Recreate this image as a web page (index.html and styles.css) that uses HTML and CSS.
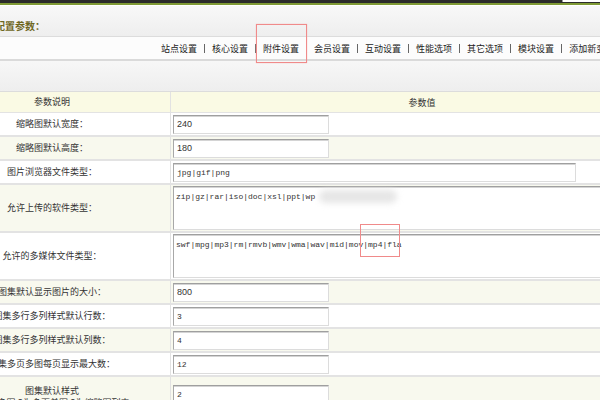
FILE: index.html
```html
<!DOCTYPE html>
<html lang="zh-CN">
<head>
<meta charset="utf-8">
<title>系统配置参数</title>
<link rel="stylesheet" href="styles.css">
</head>
<body>
<div class="topbar"><span class="scrollbox"></span></div>
<div class="title"><b>系统配置参数：</b></div>
<div class="tabs">
  <a class="tab">站点设置</a><span class="sep"></span>
  <a class="tab">核心设置</a><span class="sep"></span>
  <a class="tab marked">附件设置</a><span class="sep"></span>
  <a class="tab">会员设置</a><span class="sep"></span>
  <a class="tab">互动设置</a><span class="sep"></span>
  <a class="tab">性能选项</a><span class="sep"></span>
  <a class="tab">其它选项</a><span class="sep"></span>
  <a class="tab">模块设置</a><span class="sep"></span>
  <a class="tab">添加新变量</a>
</div>
<div class="band"></div>
<div class="params">
  <div class="row head"><div class="label">参数说明</div><div class="value center">参数值</div></div>
  <div class="row"><div class="label">缩略图默认宽度：</div><div class="value"><input class="txt" value="240"></div></div>
  <div class="row alt"><div class="label">缩略图默认高度：</div><div class="value"><input class="txt" value="180"></div></div>
  <div class="row"><div class="label">图片浏览器文件类型：</div><div class="value"><input class="txt wide mono" value="jpg|gif|png"></div></div>
  <div class="row alt tall"><div class="label">允许上传的软件类型：</div><div class="value"><textarea class="area mono">zip|gz|rar|iso|doc|xsl|ppt|wp</textarea><span class="blur"></span></div></div>
  <div class="row tall"><div class="label">允许的多媒体文件类型：</div><div class="value"><textarea class="area mono">swf|mpg|mp3|rm|rmvb|wmv|wma|wav|mid|mov|mp4|fla</textarea><span class="mark2"></span></div></div>
  <div class="row alt"><div class="label">图集默认显示图片的大小：</div><div class="value"><input class="txt" value="800"></div></div>
  <div class="row"><div class="label">图集多行多列样式默认行数：</div><div class="value"><input class="txt mono" value="3"></div></div>
  <div class="row alt"><div class="label">图集多行多列样式默认列数：</div><div class="value"><input class="txt mono" value="4"></div></div>
  <div class="row"><div class="label">图集多页多图每页显示最大数：</div><div class="value"><input class="txt mono" value="12"></div></div>
  <div class="row alt last"><div class="label">图集默认样式<br>1为单页多图,2为多页单图,3为缩略图列表：</div><div class="value top"><input class="txt mono" value="2"></div></div>
</div>
</body>
</html>
```
FILE: styles.css
```css
html, body {
  margin: 0;
  overflow: hidden;
  background: #fff;
}
body {
  font-family: "Noto Sans CJK SC", "Liberation Sans", sans-serif;
  font-size: 9px;
  color: #333;
}
.topbar {
  position: relative;
  height: 3px;
  background: #2b2b2b;
  border-bottom: 2px solid #7f9a35;
}
.scrollbox {
  position: absolute;
  right: 0;
  top: 0;
  width: 37px;
  height: 2px;
  background: #fff;
  border-left: 1px solid #999;
}
.title {
  box-sizing: border-box;
  height: 32px;
  padding-top: 14px;
  line-height: 12px;
  border-top: 1px solid #fff;
  border-bottom: 1px solid #dcdcdc;
  background: linear-gradient(#f8f8f8, #eeeeee);
  white-space: nowrap;
}
.title b {
  display: inline-block;
  margin-left: -25px;
  font-size: 10px;
  color: #6e671e;
}
.tabs {
  height: 22px;
  background: #fcfcfc;
  border-bottom: 2px solid #dadada;
  display: flex;
  align-items: center;
  padding-left: 161px;
  white-space: nowrap;
  color: #222;
}
.tab {
  position: relative;
  flex: none;
}
.sep {
  flex: none;
  width: 1px;
  height: 9px;
  margin: 0 7px;
  background: #666;
}
.marked::after {
  content: "";
  position: absolute;
  left: -7px;
  right: -8px;
  top: -18px;
  bottom: -8px;
  border: 1px solid #f08a8a;
  box-shadow: 0 0 1px #f4b0b0;
}
.band {
  height: 30px;
  background: linear-gradient(#f7f7f7, #eeeeee);
  border-bottom: 1px solid #dcdcdc;
}
.params {
  margin-left: -66px;
  width: 737px;
}
.row {
  display: grid;
  grid-template-columns: 237px 500px;
  height: 22px;
  border-bottom: 2px solid #e3e3e3;
}
.row.head {
  height: 20px;
  background: #fafae4;
  border-bottom-width: 1px;
}
.row.alt {
  background: #f8f9ee;
}
.row.tall {
  height: 46px;
}
.row.last {
  height: 40px;
}
.label {
  border-right: 1px solid #e2e2e2;
  display: flex;
  align-items: center;
  justify-content: center;
  text-align: center;
  line-height: 12px;
  white-space: nowrap;
}
.value {
  position: relative;
  display: flex;
  align-items: center;
  padding-left: 2px;
}
.value.center {
  justify-content: center;
}
.value.top {
  align-items: flex-start;
  padding-top: 8px;
}
.txt {
  box-sizing: border-box;
  width: 156px;
  height: 19px;
  margin: 0;
  padding: 0 3px;
  border: 1px solid;
  border-color: #9f9f9f #dcdcdc #dcdcdc #a8a8a8;
  box-shadow: inset 0 1px 0 #d4d4d4;
  background: #fff;
  font-family: "Liberation Sans", sans-serif;
  font-size: 9px;
  color: #333;
  outline: none;
}
.txt.wide {
  width: 403px;
}
.mono {
  font-family: "Liberation Mono", monospace;
  font-size: 8px;
}
.area {
  box-sizing: border-box;
  width: 470px;
  height: 44px;
  margin: 0;
  padding: 5px 2px;
  border: 1px solid;
  border-color: #9f9f9f #dcdcdc #dcdcdc #a8a8a8;
  box-shadow: inset 0 1px 0 #d4d4d4;
  background: #fff;
  color: #333;
  line-height: 10px;
  resize: none;
  overflow: hidden;
  outline: none;
}
.blur {
  position: absolute;
  left: 148px;
  top: 5px;
  width: 78px;
  height: 13px;
  border-radius: 7px;
  background: #e6e6e6;
  filter: blur(3px);
}
.mark2 {
  position: absolute;
  left: 189px;
  top: -9px;
  width: 38px;
  height: 31px;
  border: 1px solid #f08a8a;
}
```
